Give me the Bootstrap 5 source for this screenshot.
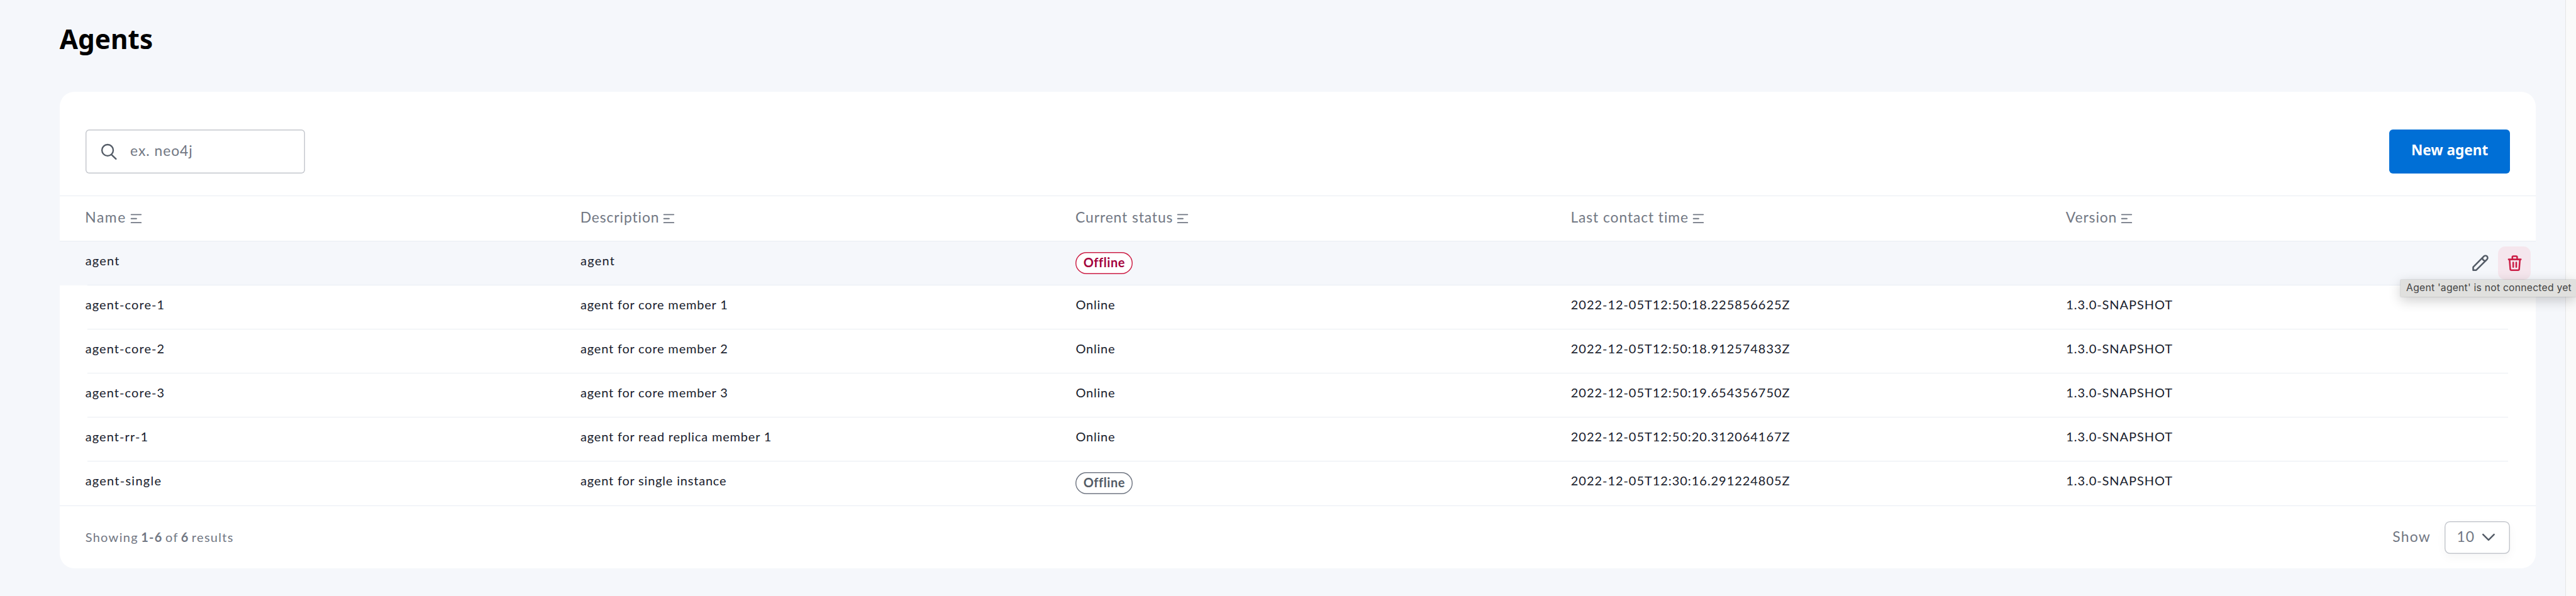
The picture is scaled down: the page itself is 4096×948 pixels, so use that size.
<!DOCTYPE html>
<html lang="en">
<head>
<meta charset="utf-8">
<meta name="viewport" content="width=device-width, initial-scale=1">
<title>Agents</title>
<link href="https://cdn.jsdelivr.net/npm/bootstrap@5.3.0/dist/css/bootstrap.min.css" rel="stylesheet">
<style>
:root{--u:.72934px;--line:#e9edf3;--muted:#717783;--ink:#18202c;--icon:#535b66}
html,body{height:100%;overflow:hidden}
body{background:#f5f7fb;font-family:Lato,"Noto Sans",sans-serif;color:var(--ink);font-variant-ligatures:none}
svg{display:block;flex:none;fill:none;stroke:currentColor;stroke-linecap:round;stroke-linejoin:round}
.main-area{padding:0 calc(64*var(--u)) 0 calc(130*var(--u))}
.side-strip{width:calc(24*var(--u));background:#fafafa;border-left:1.46px solid #e6e6e6}
.page-title{height:calc(200*var(--u));padding-top:calc(50*var(--u));font-family:"Noto Sans",sans-serif;font-size:calc(58*var(--u));line-height:calc(72*var(--u));font-weight:700;color:#000;margin:0}
.panel{height:calc(1040*var(--u));border-radius:calc(32*var(--u));background:#fff}
.toolbar{height:calc(228*var(--u));padding:calc(34*var(--u)) calc(56*var(--u)) 0;border-bottom:1px solid var(--line)}
.search-box{width:calc(479*var(--u));height:calc(96*var(--u));padding-left:calc(34*var(--u));border-radius:calc(8*var(--u));box-shadow:inset 0 0 0 calc(2*var(--u)) #c4c7cd;color:var(--icon)}
.search-box svg{width:calc(36*var(--u));height:calc(36*var(--u))}
.search-box input{font-size:calc(31.36*var(--u));letter-spacing:calc(1.31*var(--u));margin-left:calc(28*var(--u));width:calc(340*var(--u));padding:0 0 calc(4*var(--u));line-height:1.4;color:var(--muted)}
.search-box input::placeholder{color:var(--muted);opacity:1}
.btn-new{--bs-btn-bg:#006fd6;--bs-btn-color:#fff;--bs-btn-border-width:0;--bs-btn-padding-x:0;--bs-btn-padding-y:0;width:calc(263*var(--u));height:calc(96*var(--u));border-radius:calc(8*var(--u));font-family:"Noto Sans",sans-serif;font-size:calc(31*var(--u));line-height:calc(91*var(--u));padding-bottom:calc(5*var(--u));font-weight:700}
.head-row{height:calc(98*var(--u));border-bottom:1px solid var(--line);color:var(--muted);font-size:calc(31.36*var(--u));line-height:calc(48*var(--u));letter-spacing:calc(1.22*var(--u))}
.head-row>div{padding-left:calc(55.5*var(--u));gap:calc(8*var(--u))}
.head-row span{padding-bottom:calc(5*var(--u))}
.head-row .name-head{letter-spacing:calc(2.1*var(--u))}
.head-row svg{width:calc(26*var(--u));height:calc(24*var(--u))}
.item-row{height:calc(96*var(--u));font-size:calc(27.44*var(--u));line-height:calc(40*var(--u));letter-spacing:calc(1.1*var(--u))}
.item-row::after{content:"";position:absolute;left:calc(60*var(--u));right:calc(60*var(--u));bottom:0;height:1px;background:var(--line)}
.item-row>div{padding:calc(22.5*var(--u)) 0 0 calc(56*var(--u))}
.item-row.final{height:calc(98*var(--u))}
.item-row.final::after{left:0;right:0}
.item-row.hovered{background:#f5f7fb}
.short{letter-spacing:calc(1.7*var(--u))}
.ident{letter-spacing:calc(1.5*var(--u))}
.stamp{letter-spacing:calc(1.3*var(--u))}
.pill-cell{padding-top:calc(24*var(--u))!important}
.pill{display:inline-block;width:calc(124.5*var(--u));height:calc(48*var(--u));border-radius:calc(24*var(--u));line-height:calc(45*var(--u));vertical-align:top;text-align:center;font-weight:700;letter-spacing:calc(.78*var(--u));background:#fff;color:#a4003c;box-shadow:inset 0 0 0 calc(2*var(--u)) #cb1d45}
.pill.off{color:var(--icon);box-shadow:inset 0 0 0 calc(2*var(--u)) #717783}
.actions{padding:calc(12*var(--u)) calc(10*var(--u)) 0 0!important}
.act{width:calc(72*var(--u));height:calc(72*var(--u));border-radius:calc(16*var(--u));color:var(--icon)}
.act.danger{background:#f5e6ed;color:#cb1d45;margin-left:calc(3*var(--u))}
.act svg{width:calc(40*var(--u));height:calc(40*var(--u))}
.tip{position:absolute;z-index:5;left:calc(5234*var(--u));top:calc(610*var(--u));right:0;height:calc(36.5*var(--u));padding-left:calc(12*var(--u));background:#e0e0de;color:#434343;font-family:Inter,sans-serif;font-size:calc(21.5*var(--u));line-height:calc(36*var(--u));letter-spacing:calc(.33*var(--u));box-shadow:0 0 calc(2*var(--u)) rgba(0,0,0,.3),0 calc(8*var(--u)) calc(28*var(--u)) rgba(0,0,0,.2)}
.foot{height:calc(136*var(--u));padding:0 calc(56*var(--u));color:var(--muted);font-size:calc(27.44*var(--u))}
.foot-text{padding-bottom:calc(2*var(--u));letter-spacing:calc(1.8*var(--u));word-spacing:calc(-3*var(--u))}
.foot-show{font-size:calc(31.36*var(--u));padding-bottom:calc(4*var(--u));margin-right:calc(31*var(--u));letter-spacing:calc(1.67*var(--u))}
.size-pick{width:calc(142*var(--u));height:calc(72*var(--u));padding-left:calc(26*var(--u));border-radius:calc(12*var(--u));font-size:calc(31.36*var(--u));box-shadow:inset 0 0 0 calc(2*var(--u)) #c4c7cd,0 calc(8*var(--u)) calc(20*var(--u)) rgba(12,26,37,.04)}
.size-pick span{padding-bottom:calc(4*var(--u));letter-spacing:calc(1.6*var(--u))}
.size-pick svg{width:calc(30*var(--u));height:calc(18*var(--u));margin-left:calc(15*var(--u));color:var(--icon)}
</style>
<script src="https://cdn.jsdelivr.net/npm/bootstrap@5.3.0/dist/js/bootstrap.bundle.min.js"></script>
</head>
<body>
<svg class="d-none">
  <symbol id="i-sort" viewBox="0 0 26 24"><path d="M2.3 3.2h21.4M2.3 12h11.4M2.3 20.8h21.4" stroke-width="2.6"/></symbol>
</svg>
<div class="d-flex h-100 position-relative">
  <main class="main-area flex-grow-1">
    <h1 class="page-title">Agents</h1>
    <section class="panel">
      <div class="toolbar d-flex align-items-center justify-content-between">
        <div class="search-box d-flex align-items-center">
          <svg viewBox="0 0 36 36" stroke-width="3.2"><circle cx="15.2" cy="15" r="12.3"/><path d="M23.5 24.5 33.5 34"/></svg>
          <input type="text" class="border-0 bg-transparent" placeholder="ex. neo4j">
        </div>
        <button type="button" class="btn btn-new">New agent</button>
      </div>
      <div class="head-row row g-0 row-cols-5">
        <div class="col d-flex align-items-center"><span class="name-head">Name</span><svg><use href="#i-sort"/></svg></div>
        <div class="col d-flex align-items-center"><span>Description</span><svg><use href="#i-sort"/></svg></div>
        <div class="col d-flex align-items-center"><span>Current status</span><svg><use href="#i-sort"/></svg></div>
        <div class="col d-flex align-items-center"><span>Last contact time</span><svg><use href="#i-sort"/></svg></div>
        <div class="col d-flex align-items-center"><span>Version</span><svg><use href="#i-sort"/></svg></div>
      </div>
      <div class="item-row hovered position-relative row g-0 row-cols-5">
        <div class="col short">agent</div>
        <div class="col short">agent</div>
        <div class="col pill-cell"><span class="pill">Offline</span></div>
        <div class="col"></div>
        <div class="col actions d-flex justify-content-end">
          <span class="act d-flex align-items-center justify-content-center"><svg viewBox="0 0 40 40" stroke-width="3.5"><path d="M4.8 35.2v-6.600L28.200 5.100a4.700 4.700 0 0 1 6.700 6.700L11.400 35.200zM25 8.200c.3 4.200 3 6.800 7 6.800"/></svg></span>
          <span class="act danger d-flex align-items-center justify-content-center"><svg viewBox="0 0 40 40" stroke-width="3.5"><path d="M6.700 11.800h26.600M8.700 12l1.600 21q.2 2.200 2.400 2.200h14.600q2.200 0 2.400-2.200l1.600-21M14.800 11V7q0-2.200 2.200-2.200h6q2.200 0 2.200 2.200v4M16.700 18.500v10M23.300 18.500v10"/></svg></span>
        </div>
      </div>
      <div class="item-row position-relative row g-0 row-cols-5">
        <div class="col ident">agent-core-1</div><div class="col">agent for core member 1</div><div class="col">Online</div><div class="col stamp">2022-12-05T12:50:18.225856625Z</div><div class="col stamp">1.3.0-SNAPSHOT</div>
      </div>
      <div class="item-row position-relative row g-0 row-cols-5">
        <div class="col ident">agent-core-2</div><div class="col">agent for core member 2</div><div class="col">Online</div><div class="col stamp">2022-12-05T12:50:18.912574833Z</div><div class="col stamp">1.3.0-SNAPSHOT</div>
      </div>
      <div class="item-row position-relative row g-0 row-cols-5">
        <div class="col ident">agent-core-3</div><div class="col">agent for core member 3</div><div class="col">Online</div><div class="col stamp">2022-12-05T12:50:19.654356750Z</div><div class="col stamp">1.3.0-SNAPSHOT</div>
      </div>
      <div class="item-row position-relative row g-0 row-cols-5">
        <div class="col ident">agent-rr-1</div><div class="col">agent for read replica member 1</div><div class="col">Online</div><div class="col stamp">2022-12-05T12:50:20.312064167Z</div><div class="col stamp">1.3.0-SNAPSHOT</div>
      </div>
      <div class="item-row final position-relative row g-0 row-cols-5">
        <div class="col short">agent-single</div><div class="col">agent for single instance</div><div class="col pill-cell"><span class="pill off">Offline</span></div><div class="col stamp">2022-12-05T12:30:16.291224805Z</div><div class="col stamp">1.3.0-SNAPSHOT</div>
      </div>
      <div class="foot d-flex align-items-center">
        <div class="foot-text">Showing <b>1-6</b> of <b>6</b> results</div>
        <div class="foot-show ms-auto">Show</div>
        <div class="size-pick d-flex align-items-center"><span>10</span><svg viewBox="0 0 30 18" stroke-width="3.4"><path d="M3 3l12 12L27 3"/></svg></div>
      </div>
    </section>
  </main>
  <aside class="side-strip"></aside>
  <div class="tip text-nowrap overflow-visible">Agent 'agent' is not connected yet</div>
</div>
</body>
</html>
